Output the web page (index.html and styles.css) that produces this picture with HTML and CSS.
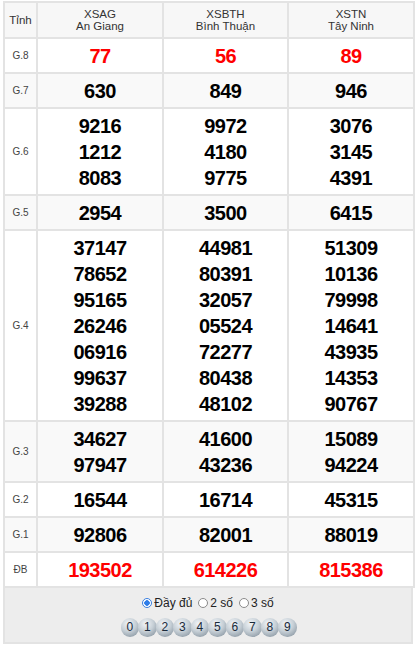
FILE: index.html
```html
<!DOCTYPE html>
<html lang="vi">
<head>
<meta charset="utf-8">
<link rel="stylesheet" href="styles.css">
</head>
<body>
<div class="wrap">
<table class="kq">
  <colgroup><col class="c0"><col class="c1"><col class="c2"><col class="c3"></colgroup>
  <tr class="head">
    <th>Tỉnh</th>
    <th>XSAG<br>An Giang</th>
    <th>XSBTH<br>Bình Thuận</th>
    <th>XSTN<br>Tây Ninh</th>
  </tr>
  <tr><td class="lb">G.8</td><td class="n red">77</td><td class="n red">56</td><td class="n red">89</td></tr>
  <tr class="alt"><td class="lb">G.7</td><td class="n">630</td><td class="n">849</td><td class="n">946</td></tr>
  <tr><td class="lb">G.6</td><td class="n">9216<br>1212<br>8083</td><td class="n">9972<br>4180<br>9775</td><td class="n">3076<br>3145<br>4391</td></tr>
  <tr class="alt"><td class="lb">G.5</td><td class="n">2954</td><td class="n">3500</td><td class="n">6415</td></tr>
  <tr><td class="lb">G.4</td>
    <td class="n">37147<br>78652<br>95165<br>26246<br>06916<br>99637<br>39288</td>
    <td class="n">44981<br>80391<br>32057<br>05524<br>72277<br>80438<br>48102</td>
    <td class="n">51309<br>10136<br>79998<br>14641<br>43935<br>14353<br>90767</td></tr>
  <tr class="alt"><td class="lb">G.3</td><td class="n">34627<br>97947</td><td class="n">41600<br>43236</td><td class="n">15089<br>94224</td></tr>
  <tr><td class="lb">G.2</td><td class="n">16544</td><td class="n">16714</td><td class="n">45315</td></tr>
  <tr class="alt"><td class="lb">G.1</td><td class="n">92806</td><td class="n">82001</td><td class="n">88019</td></tr>
  <tr><td class="lb">ĐB</td><td class="n red">193502</td><td class="n red">614226</td><td class="n red">815386</td></tr>
</table>
<div class="foot">
  <div class="opts">
    <label class="opt"><span class="radio on"></span>Đầy đủ</label>
    <label class="opt"><span class="radio"></span>2 số</label>
    <label class="opt"><span class="radio"></span>3 số</label>
  </div>
  <div class="balls">
    <span class="ball">0</span><span class="ball">1</span><span class="ball">2</span><span class="ball">3</span><span class="ball">4</span><span class="ball">5</span><span class="ball">6</span><span class="ball">7</span><span class="ball">8</span><span class="ball">9</span>
  </div>
</div>
</div>
</body>
</html>
```
FILE: styles.css
```css
html, body { margin: 0; padding: 0; background: #fff; }
body { font-family: "Liberation Sans", Arial, sans-serif; color: #222; }
.wrap { width: 410px; margin: 1px 0 0 3px; }
.kq { width: 410px; border-collapse: separate; border-spacing: 0; table-layout: fixed;
  border-top: 2px solid #e3e3e3; border-left: 2px solid #e3e3e3; }
.c0 { width: 33px; }
.c1 { width: 126px; }
.c2 { width: 125px; }
.c3 { width: 126px; }
.kq th, .kq td { border-right: 2px solid #e3e3e3; border-bottom: 2px solid #e3e3e3; text-align: center; padding: 0; }
.head th { background: #f7f7f7; font-weight: normal; font-size: 11.5px; line-height: 12px; color: #333; height: 34px; }
.alt td { background: #f9f9f9; }
.lb { font-size: 10px; color: #444; }
.n { font-size: 20px; font-weight: bold; line-height: 26px; letter-spacing: -0.5px; color: #000; padding: 4px 0 3px !important; }
.red { color: #f00; }
.foot { background: #ededed; border: 2px solid #e3e3e3; border-top: 0; height: 56px; box-sizing: border-box;
  display: flex; flex-direction: column; align-items: center; padding-top: 7px; gap: 7px; }
.opts { display: flex; gap: 6px; font-size: 12px; color: #222; line-height: 16px; }
.opt { display: flex; align-items: center; gap: 2px; }
.radio { width: 10px; height: 10px; border: 1px solid #8a8a8a; border-radius: 50%; background: #fff; box-sizing: border-box; display: inline-block; }
.radio.on { border-color: #3a7fe0; background: radial-gradient(circle, #2f7de8 0 2.5px, #fff 3px); }
.balls { display: flex; }
.ball { width: 18.5px; height: 18.5px; border-radius: 50%; margin-right: -1px; font-size: 12px; line-height: 18.5px; text-align: center; color: #1a2a3a;
  background: radial-gradient(circle at 40% 30%, #f2f5f8 0, #c6cfd6 45%, #8d9aa5 85%, #75838f 100%); }
```
